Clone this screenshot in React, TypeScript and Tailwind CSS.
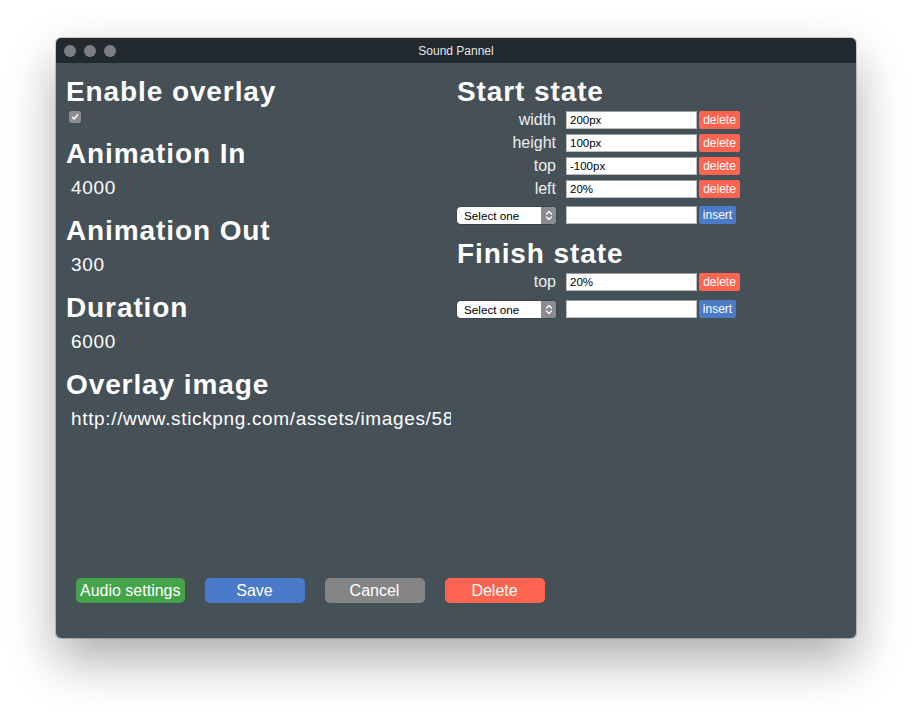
import React from "react";

function Heading({ children }: { children: React.ReactNode }) {
  return (
    <div className="h-[34px] leading-[34px] text-[28px] font-bold tracking-[0.9px] text-white whitespace-nowrap">
      {children}
    </div>
  );
}

function Value({ children }: { children: React.ReactNode }) {
  return (
    <div className="h-[34px] leading-[34px] text-[19px] tracking-[0.65px] text-white pl-[5px] w-[385px] overflow-hidden whitespace-nowrap">
      {children}
    </div>
  );
}

function TextBox({ value }: { value: string }) {
  return (
    <div className="ml-[10px] w-[131px] h-[18px] bg-white border border-[#bdbdbd] border-t-[#9a9a9a] pl-[3px] text-[11.5px] leading-[16px] text-black whitespace-nowrap overflow-hidden">
      {value}
    </div>
  );
}

function PropRow({ label, value }: { label: string; value: string }) {
  return (
    <div className="flex items-center h-[18px]">
      <div className="w-[99px] text-right text-[16px] leading-[18px] text-[#eeeeee]">{label}</div>
      <TextBox value={value} />
      <div className="ml-[2px] w-[41px] h-[18px] rounded-[2px] bg-[#ff6450] text-white text-[12px] leading-[18px] text-center">
        delete
      </div>
    </div>
  );
}

function SelectRow() {
  return (
    <div className="flex items-center h-[18px]">
      <div className="w-[99px] h-[17px] rounded-[4px] bg-white flex items-center shadow-[0_0_0_0.5px_rgba(0,0,0,0.3)] overflow-hidden">
        <div className="flex-1 pl-[7px] text-[11.7px] leading-[17px] text-black">Select one</div>
        <div className="w-[15px] h-[17px] bg-[#8c8c90] flex items-center justify-center">
          <svg width="8" height="11" viewBox="0 0 8 11" fill="none" stroke="white" strokeWidth="1.3" strokeLinecap="round" strokeLinejoin="round">
            <path d="M1.5 4 L4 1.5 L6.5 4" />
            <path d="M1.5 7 L4 9.5 L6.5 7" />
          </svg>
        </div>
      </div>
      <TextBox value="" />
      <div className="ml-[2px] w-[37px] h-[18px] rounded-[2px] bg-[#4a7bc8] text-white text-[12px] leading-[18px] text-center">
        insert
      </div>
    </div>
  );
}

function Dot() {
  return <span className="block w-[12px] h-[12px] rounded-full bg-[#7d7d82]" />;
}

export default function App() {
  return (
    <div className="w-[912px] h-[712px] bg-white pt-[38px] pl-[56px] font-['Liberation_Sans',Arial,sans-serif]">
      <div className="w-[800px] h-[600px] rounded-[5px] overflow-hidden flex flex-col shadow-[0_22px_50px_rgba(0,0,0,0.33),0_0_0_1px_rgba(0,0,0,0.18)]">
        <div className="h-[25px] shrink-0 bg-[#22292f] grid grid-cols-[1fr_auto_1fr] items-center">
          <div className="flex gap-[8px] pl-[8px]">
            <Dot />
            <Dot />
            <Dot />
          </div>
          <div className="text-[12px] text-[#e6e6e6]">Sound Pannel</div>
          <div />
        </div>
        <div className="flex-1 bg-[#465057] flex flex-col pl-[10px] pt-[12px] pb-[35px]">
          <div className="flex">
            <div className="w-[391px] flex flex-col">
              <Heading>Enable overlay</Heading>
              <div className="ml-[3px] mt-[2px] w-[12px] h-[12px] rounded-[3px] bg-[#8d8d91] flex items-center justify-center">
                <svg width="8" height="8" viewBox="0 0 8 8" fill="none" stroke="white" strokeWidth="1.4" strokeLinecap="round" strokeLinejoin="round">
                  <path d="M1.5 4.3 L3.2 6 L6.5 1.8" />
                </svg>
              </div>
              <div className="mt-[14px]">
                <Heading>Animation In</Heading>
              </div>
              <Value>4000</Value>
              <div className="mt-[9px]">
                <Heading>Animation Out</Heading>
              </div>
              <Value>300</Value>
              <div className="mt-[9px]">
                <Heading>Duration</Heading>
              </div>
              <Value>6000</Value>
              <div className="mt-[9px]">
                <Heading>Overlay image</Heading>
              </div>
              <Value>http://www.stickpng.com/assets/images/58e9f3b0eb97430e819064f7.png</Value>
            </div>
            <div className="flex flex-col">
              <Heading>Start state</Heading>
              <div className="mt-[2px] flex flex-col gap-[5px]">
                <PropRow label="width" value="200px" />
                <PropRow label="height" value="100px" />
                <PropRow label="top" value="-100px" />
                <PropRow label="left" value="20%" />
              </div>
              <div className="mt-[8px]">
                <SelectRow />
              </div>
              <div className="mt-[13px]">
                <Heading>Finish state</Heading>
              </div>
              <div className="mt-[2px] flex flex-col gap-[5px]">
                <PropRow label="top" value="20%" />
              </div>
              <div className="mt-[9px]">
                <SelectRow />
              </div>
            </div>
          </div>
          <div className="mt-auto flex gap-[20px] pl-[10px]">
            <div className="h-[25px] px-[4px] rounded-[5px] bg-[#45a449] text-white text-[16px] leading-[25px] text-center">
              Audio settings
            </div>
            <div className="w-[100px] h-[25px] rounded-[5px] bg-[#4a7bc8] text-white text-[16px] leading-[25px] text-center">
              Save
            </div>
            <div className="w-[100px] h-[25px] rounded-[5px] bg-[#858585] text-white text-[16px] leading-[25px] text-center">
              Cancel
            </div>
            <div className="w-[100px] h-[25px] rounded-[5px] bg-[#ff6450] text-white text-[16px] leading-[25px] text-center">
              Delete
            </div>
          </div>
        </div>
      </div>
    </div>
  );
}
